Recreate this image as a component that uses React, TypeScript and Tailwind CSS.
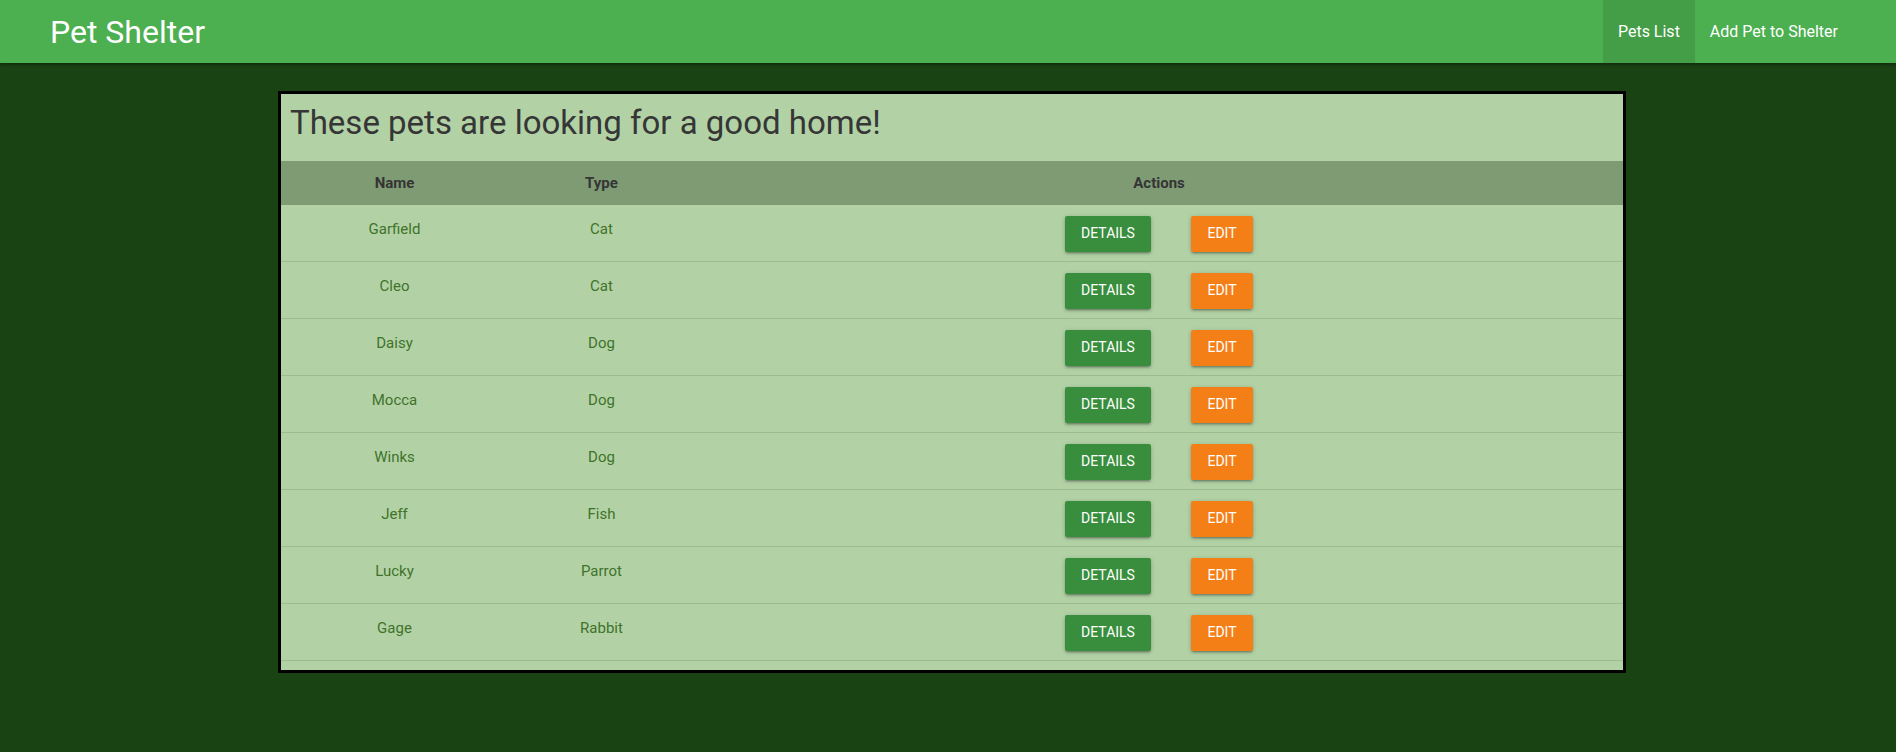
const pets = [
  { name: 'Garfield', type: 'Cat' },
  { name: 'Cleo', type: 'Cat' },
  { name: 'Daisy', type: 'Dog' },
  { name: 'Mocca', type: 'Dog' },
  { name: 'Winks', type: 'Dog' },
  { name: 'Jeff', type: 'Fish' },
  { name: 'Lucky', type: 'Parrot' },
  { name: 'Gage', type: 'Rabbit' },
];

const btnShadow =
  'shadow-[0_2px_2px_0_rgba(0,0,0,0.14),0_3px_1px_-2px_rgba(0,0,0,0.12),0_1px_5px_0_rgba(0,0,0,0.2)]';

export default function App() {
  return (
    <div className="min-h-[752px] bg-[#1a4314] font-['Segoe_UI',Roboto,sans-serif]">
      {/* Navbar */}
      <nav className="relative z-10 h-[63px] bg-[#4caf50] flex items-center justify-between pl-[50px] pr-[43px] shadow-[0_2px_3px_rgba(0,0,0,0.35)]">
        <a className="text-[32px] leading-none text-white">Pet Shelter</a>
        <ul className="flex h-full">
          <li>
            <a className="h-full flex items-center px-[15px] bg-black/10 text-white text-[16px]">Pets List</a>
          </li>
          <li>
            <a className="h-full flex items-center px-[15px] text-white text-[16px]">Add Pet to Shelter</a>
          </li>
        </ul>
      </nav>

      {/* Pets table card */}
      <main className="pt-[28px] pl-[278px]">
        <div className="w-[1348px] border-[3px] border-black bg-[#b2d2a6] pb-[9px]">
          <h4 className="pl-[9px] pt-[9px] pb-[18px] text-[33px] leading-[40px] text-[#363636]">
            These pets are looking for a good home!
          </h4>

          <div className="grid grid-cols-[227px_187px_1fr] h-[44px] bg-[#7f9b74] items-center text-center text-[15px] font-bold text-[#353535]">
            <div>Name</div>
            <div>Type</div>
            <div>Actions</div>
          </div>

          {pets.map((pet) => (
            <div
              key={pet.name}
              className="grid grid-cols-[227px_187px_1fr] h-[57px] border-b border-[#9dbb91] text-center text-[15px] text-[#41722a]"
            >
              <div className="pt-[13px] leading-[22px]">{pet.name}</div>
              <div className="pt-[13px] leading-[22px]">{pet.type}</div>
              <div className="flex items-center justify-center gap-[40px] pt-[1px]">
                <button className={`w-[86px] h-[36px] rounded-[2px] bg-[#388e3c] text-white text-[14px] uppercase ${btnShadow}`}>
                  Details
                </button>
                <button className={`w-[62px] h-[36px] rounded-[2px] bg-[#f57f17] text-white text-[14px] uppercase ${btnShadow}`}>
                  Edit
                </button>
              </div>
            </div>
          ))}
        </div>
      </main>
    </div>
  );
}
